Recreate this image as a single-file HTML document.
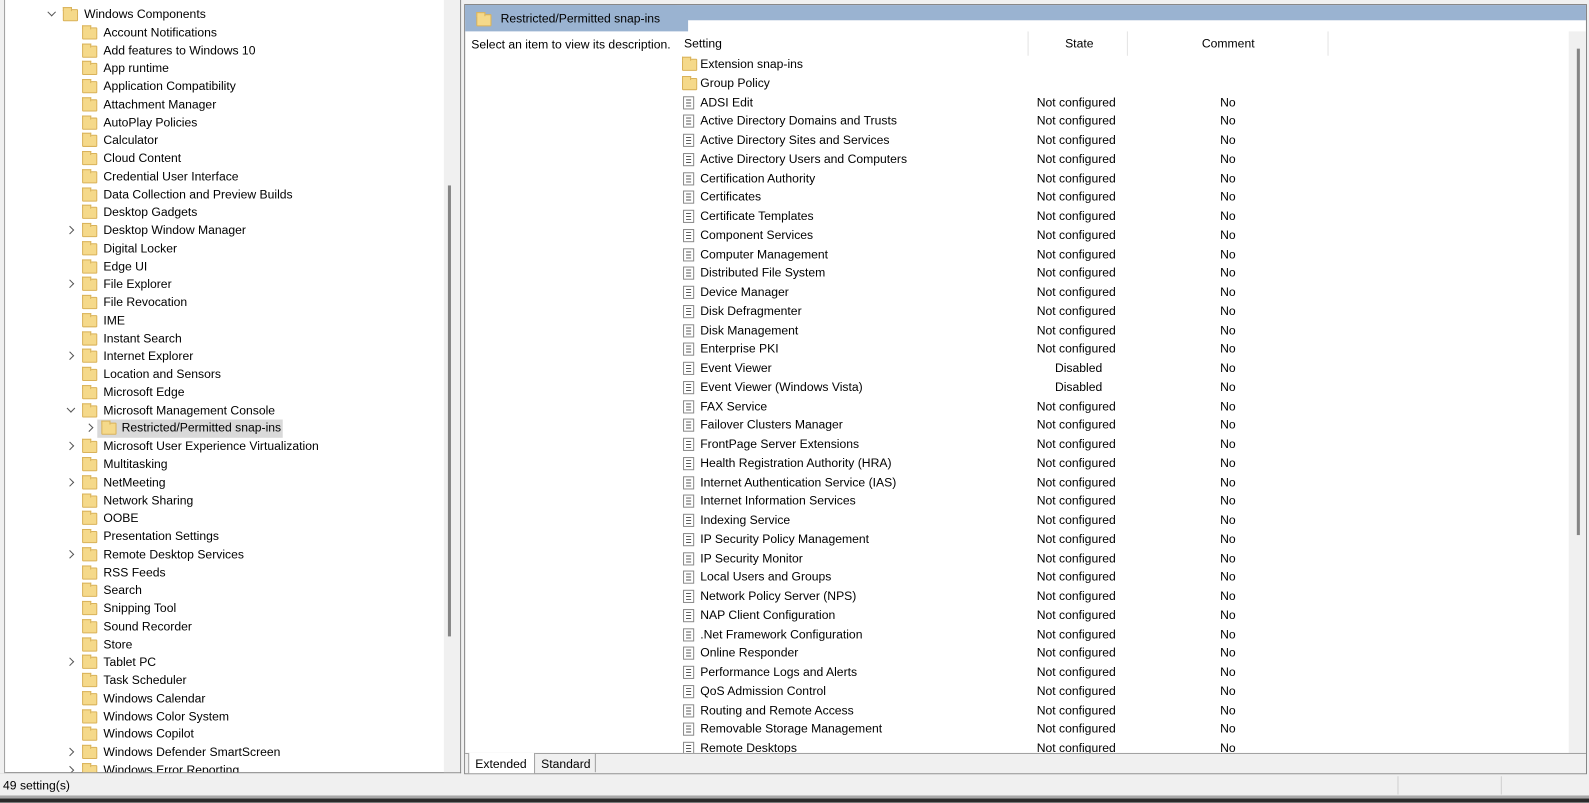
<!DOCTYPE html>
<html><head><meta charset="utf-8"><style>
*{margin:0;padding:0;box-sizing:border-box}
body{width:1589px;height:803px;background:#f0f0f0;font-family:"Liberation Sans",sans-serif;font-size:12px;color:#000;position:relative;overflow:hidden}
#w{position:absolute;left:0;top:0;width:1568px;height:792px;transform:scale(1.01339);transform-origin:0 0}
.a{position:absolute;white-space:nowrap}
.f{position:absolute;width:15px;height:12px;background:#f5d98a;border:1px solid #d9b25a;border-radius:1px}
.f:before{content:"";position:absolute;left:-1px;top:-3px;width:7px;height:3px;background:#f5d98a;border:1px solid #d9b25a;border-bottom:none}
.d{position:absolute;width:11px;height:13px;border:1px solid #8a8a8a;background:#fff}
.d:before{content:"";position:absolute;left:2px;top:2px;width:5px;height:7px;background:repeating-linear-gradient(#555 0 1px,transparent 1px 3px)}
.c{position:absolute;width:6px;height:6px;border-right:1.3px solid #555;border-bottom:1.3px solid #555}
.cr{transform:rotate(-45deg)}
.cd{transform:rotate(45deg)}
</style></head><body><div id="w">
<div class="a" style="left:0;top:0;width:455px;height:763px;background:#fff;border-right:1px solid #828282;border-bottom:1px solid #828282"></div>
<div class="a" style="left:0;top:0;width:5px;height:763px;background:#f0f0f0;border-right:1px solid #a0a0a0"></div>
<div class="a" style="left:438px;top:0;width:16px;height:762px;background:#f0f0f0"></div>
<div class="a" style="left:442px;top:183px;width:3px;height:445px;background:#858585"></div>
<div class="a" style="left:96px;top:414px;width:183px;height:18px;background:#d9d9d9"></div>
<div id="tree"></div>
<div class="a" style="left:458px;top:4px;width:1108px;height:760px;background:#fff;border:1px solid #828282"></div>
<div class="a" style="left:459px;top:5px;width:1106px;height:15px;background:#9ab3d1"></div>
<div class="a" style="left:459px;top:5px;width:220px;height:26px;background:#9ab3d1;border-top-right-radius:14px"></div>
<div class="f" style="left:470px;top:14px"></div>
<div class="a" style="left:494px;top:11px">Restricted/Permitted snap-ins</div>
<div class="a" style="left:465px;top:37px">Select an item to view its description.</div>
<div class="a" style="left:675px;top:36px">Setting</div>
<div class="a" style="left:1051px;top:36px">State</div>
<div class="a" style="left:1186px;top:36px">Comment</div>
<div class="a" style="left:1014px;top:31px;width:1px;height:24px;background:#e3e3e3"></div>
<div class="a" style="left:1112px;top:31px;width:1px;height:24px;background:#e3e3e3"></div>
<div class="a" style="left:1310px;top:31px;width:1px;height:24px;background:#e3e3e3"></div>
<div class="a" style="left:1548px;top:31px;width:17px;height:712px;background:#f0f0f0"></div>
<div class="a" style="left:1556px;top:48px;width:3px;height:480px;background:#858585"></div>
<div id="list"></div>
<div class="a" style="left:459px;top:743px;width:1106px;height:20px;background:#f0f0f0;border-top:1px solid #a0a0a0"></div>
<div class="a" style="left:462px;top:743px;width:66px;height:20px;background:#fff;border-left:1px solid #a0a0a0;border-right:1px solid #a0a0a0"></div>
<div class="a" style="left:469px;top:747px">Extended</div>
<div class="a" style="left:528px;top:743px;width:60px;height:19px;border-right:1px solid #a0a0a0"></div>
<div class="a" style="left:534px;top:747px">Standard</div>
<div class="a" style="left:3px;top:768px">49 setting(s)</div>
<div class="a" style="left:1379px;top:766px;width:1px;height:18px;background:#d0d0d0"></div>
<div class="a" style="left:1481px;top:766px;width:1px;height:18px;background:#d0d0d0"></div>
<div class="a" style="left:0;top:785px;width:1568px;height:7px;background:#2a2a2a;border-top:3px solid #a8a8a8"></div>
</div>
<script>
var t=[["Windows Components",0,"d"],["Account Notifications",1],["Add features to Windows 10",1],["App runtime",1],["Application Compatibility",1],["Attachment Manager",1],["AutoPlay Policies",1],["Calculator",1],["Cloud Content",1],["Credential User Interface",1],["Data Collection and Preview Builds",1],["Desktop Gadgets",1],["Desktop Window Manager",1,"r"],["Digital Locker",1],["Edge UI",1],["File Explorer",1,"r"],["File Revocation",1],["IME",1],["Instant Search",1],["Internet Explorer",1,"r"],["Location and Sensors",1],["Microsoft Edge",1],["Microsoft Management Console",1,"d"],["Restricted/Permitted snap-ins",2,"r"],["Microsoft User Experience Virtualization",1,"r"],["Multitasking",1],["NetMeeting",1,"r"],["Network Sharing",1],["OOBE",1],["Presentation Settings",1],["Remote Desktop Services",1,"r"],["RSS Feeds",1],["Search",1],["Snipping Tool",1],["Sound Recorder",1],["Store",1],["Tablet PC",1,"r"],["Task Scheduler",1],["Windows Calendar",1],["Windows Color System",1],["Windows Copilot",1],["Windows Defender SmartScreen",1,"r"],["Windows Error Reporting",1,"r"]];
var h="";t.forEach(function(r,i){var y=14+i*17.76,x=[62,81,100][r[1]],tx=[83,102,120][r[1]];
if(r[2]=="d")h+='<div class="c cd" style="left:'+(x-14)+'px;top:'+(y-5)+'px"></div>';
if(r[2]=="r")h+='<div class="c cr" style="left:'+(x-15)+'px;top:'+(y-3)+'px"></div>';
h+='<div class="f" style="left:'+x+'px;top:'+(y-5)+'px"></div><div class="a" style="left:'+tx+'px;top:'+(y-7)+'px;color:#000">'+r[0]+'</div>';});
document.getElementById("tree").outerHTML='<div class="a" style="left:0;top:0;width:438px;height:762px;overflow:hidden">'+h+'</div>';
var L=[["Extension snap-ins","",""],["Group Policy","",""],"ADSI Edit","Active Directory Domains and Trusts","Active Directory Sites and Services","Active Directory Users and Computers","Certification Authority","Certificates","Certificate Templates","Component Services","Computer Management","Distributed File System","Device Manager","Disk Defragmenter","Disk Management","Enterprise PKI",["Event Viewer","Disabled","No"],["Event Viewer (Windows Vista)","Disabled","No"],"FAX Service","Failover Clusters Manager","FrontPage Server Extensions","Health Registration Authority (HRA)","Internet Authentication Service (IAS)","Internet Information Services","Indexing Service","IP Security Policy Management","IP Security Monitor","Local Users and Groups","Network Policy Server (NPS)","NAP Client Configuration",".Net Framework Configuration","Online Responder","Performance Logs and Alerts","QoS Admission Control","Routing and Remote Access","Removable Storage Management","Remote Desktops"];
var g="";L.forEach(function(r,i){var y=63+i*18.75,fol=typeof r!="string"&&r[1]=="";if(typeof r=="string")r=[r,"Not configured","No"];
g+=(fol?'<div class="f" style="left:673px;top:'+(y-5)+'px"></div>':'<div class="d" style="left:674px;top:'+(y-6)+'px"></div>');
g+='<div class="a" style="left:691px;top:'+(y-7)+'px">'+r[0]+'</div>';
if(r[1]){var sx=r[1]=="Disabled"?1041:1023;g+='<div class="a" style="left:'+sx+'px;top:'+(y-7)+'px">'+r[1]+'</div><div class="a" style="left:1204px;top:'+(y-7)+'px">No</div>';}});
document.getElementById("list").outerHTML='<div class="a" style="left:459px;top:55px;width:1089px;height:688px;overflow:hidden"><div class="a" style="left:-459px;top:-55px;width:1548px;height:743px">'+g+'</div></div>';
</script>
</body></html>
